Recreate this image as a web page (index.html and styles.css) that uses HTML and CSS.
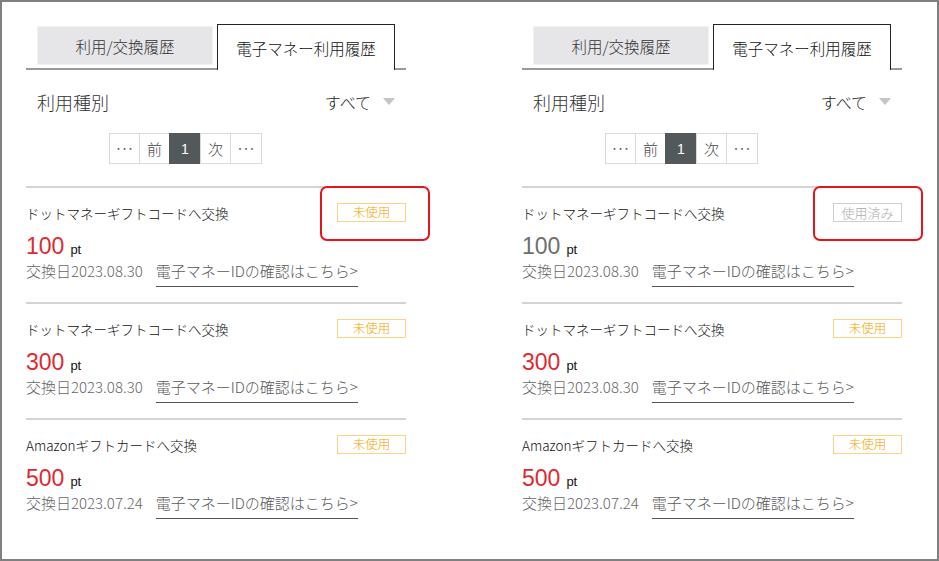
FILE: index.html
```html
<!DOCTYPE html>
<html lang="ja">
<head>
<meta charset="utf-8">
<title>電子マネー利用履歴</title>
<link rel="stylesheet" href="styles.css">
</head>
<body>
<div class="frame">
  <section class="panel">
    <div class="tabs">
      <div class="tab">利用/交換履歴</div>
      <div class="tab active">電子マネー利用履歴</div>
    </div>
    <div class="filter">
      <span class="filter-label">利用種別</span>
      <span class="filter-select">すべて<i class="caret"></i></span>
    </div>
    <div class="pager">
      <span class="cell dots">･･･</span>
      <span class="cell">前</span>
      <span class="cell wide current">1</span>
      <span class="cell">次</span>
      <span class="cell wide dots">･･･</span>
    </div>
    <div class="list">
      <div class="item">
        <div class="head"><span class="title">ドットマネーギフトコードへ交換</span><span class="badge unused">未使用</span></div>
        <div class="amount"><span class="num">100</span><span class="unit">pt</span></div>
        <div class="meta"><span class="date">交換日2023.08.30</span><a class="link" href="#">電子マネーIDの確認はこちら&gt;</a></div>
        <div class="mark mark-left"></div>
      </div>
      <div class="item">
        <div class="head"><span class="title">ドットマネーギフトコードへ交換</span><span class="badge unused">未使用</span></div>
        <div class="amount"><span class="num">300</span><span class="unit">pt</span></div>
        <div class="meta"><span class="date">交換日2023.08.30</span><a class="link" href="#">電子マネーIDの確認はこちら&gt;</a></div>
      </div>
      <div class="item">
        <div class="head"><span class="title">Amazonギフトカードへ交換</span><span class="badge unused">未使用</span></div>
        <div class="amount"><span class="num">500</span><span class="unit">pt</span></div>
        <div class="meta"><span class="date">交換日2023.07.24</span><a class="link" href="#">電子マネーIDの確認はこちら&gt;</a></div>
      </div>
    </div>
  </section>

  <section class="panel">
    <div class="tabs">
      <div class="tab">利用/交換履歴</div>
      <div class="tab active">電子マネー利用履歴</div>
    </div>
    <div class="filter">
      <span class="filter-label">利用種別</span>
      <span class="filter-select">すべて<i class="caret"></i></span>
    </div>
    <div class="pager">
      <span class="cell dots">･･･</span>
      <span class="cell">前</span>
      <span class="cell wide current">1</span>
      <span class="cell">次</span>
      <span class="cell wide dots">･･･</span>
    </div>
    <div class="list">
      <div class="item">
        <div class="head"><span class="title">ドットマネーギフトコードへ交換</span><span class="badge used">使用済み</span></div>
        <div class="amount"><span class="num gray">100</span><span class="unit">pt</span></div>
        <div class="meta"><span class="date">交換日2023.08.30</span><a class="link" href="#">電子マネーIDの確認はこちら&gt;</a></div>
        <div class="mark mark-right"></div>
      </div>
      <div class="item">
        <div class="head"><span class="title">ドットマネーギフトコードへ交換</span><span class="badge unused">未使用</span></div>
        <div class="amount"><span class="num">300</span><span class="unit">pt</span></div>
        <div class="meta"><span class="date">交換日2023.08.30</span><a class="link" href="#">電子マネーIDの確認はこちら&gt;</a></div>
      </div>
      <div class="item">
        <div class="head"><span class="title">Amazonギフトカードへ交換</span><span class="badge unused">未使用</span></div>
        <div class="amount"><span class="num">500</span><span class="unit">pt</span></div>
        <div class="meta"><span class="date">交換日2023.07.24</span><a class="link" href="#">電子マネーIDの確認はこちら&gt;</a></div>
      </div>
    </div>
  </section>
</div>
</body>
</html>
```

FILE: styles.css
```css
html, body {
  margin: 0;
  padding: 0;
  background: #fff;
}
body {
  font-family: "Noto Sans CJK JP", "Noto Sans", sans-serif;
  font-weight: 300;
  color: #222;
}
.frame {
  box-sizing: border-box;
  width: 939px;
  height: 561px;
  border: 2px solid #808080;
  display: flex;
  gap: 116px;
  padding: 22px 0 0 24px;
  overflow: hidden;
}
.panel {
  width: 380px;
  flex: none;
}

/* tabs */
.tabs {
  display: flex;
  align-items: flex-end;
  gap: 4px;
  height: 44px;
  padding-left: 11px;
  border-bottom: 2px solid #9a9a9a;
}
.tab {
  box-sizing: border-box;
  width: 176px;
  height: 39px;
  margin-bottom: 3px;
  background: #e6e6e8;
  border: 1px solid #f2f2f2;
  display: flex;
  align-items: center;
  justify-content: center;
  font-size: 15.5px;
  color: #333;
}
.tab.active {
  width: 178px;
  height: 46px;
  margin-bottom: -2px;
  background: #fff;
  border: 1px solid #222;
  border-bottom: none;
  padding-top: 1px;
  color: #111;
}

/* filter */
.filter {
  height: 63px;
  display: flex;
  align-items: center;
  justify-content: space-between;
  padding: 0 11px;
}
.filter-label {
  font-size: 18px;
  color: #333;
}
.filter-select {
  display: flex;
  align-items: center;
  gap: 12px;
  font-size: 16px;
  color: #222;
}
.caret {
  width: 0;
  height: 0;
  border-left: 6px solid transparent;
  border-right: 6px solid transparent;
  border-top: 7px solid #c4c4c4;
}

/* pager */
.pager {
  display: flex;
  margin-left: 83px;
  height: 31px;
}
.cell {
  box-sizing: border-box;
  width: 31px;
  height: 31px;
  margin-left: -1px;
  border: 1px solid #dadada;
  display: flex;
  align-items: center;
  justify-content: center;
  font-size: 15px;
  color: #444;
  background: #fff;
}
.cell:first-child {
  margin-left: 0;
}
.cell.wide {
  width: 32px;
}
.cell.dots {
  font-size: 12px;
  color: #555;
}
.cell.current {
  background: #53585a;
  border-color: #53585a;
  color: #fff;
  font-family: "Liberation Sans", sans-serif;
  font-weight: 400;
  font-size: 14px;
}

/* list */
.list {
  margin-top: 22px;
}
.item {
  position: relative;
  box-sizing: border-box;
  height: 116px;
  border-top: 2px solid #d4d4d4;
  padding: 15px 0 21px;
}
.head {
  display: flex;
  align-items: center;
  justify-content: space-between;
  height: 19px;
}
.title {
  font-size: 13.5px;
  color: #111;
}
.badge {
  box-sizing: border-box;
  width: 69px;
  height: 19px;
  display: flex;
  align-items: center;
  justify-content: center;
  font-size: 12.5px;
  line-height: 1;
}
.badge.unused {
  border: 1px solid #fdd383;
  color: #f5a300;
}
.badge.used {
  border: 1px solid #cfcfcf;
  color: #acacac;
  font-size: 13px;
}
.amount {
  margin-top: 9px;
  height: 30px;
  line-height: 30px;
  font-family: "Liberation Sans", sans-serif;
  font-weight: 400;
}
.num {
  font-size: 23px;
  color: #dd2a30;
}
.num.gray {
  color: #6e6e6e;
}
.unit {
  font-size: 13px;
  color: #111;
  margin-left: 6px;
}
.meta {
  height: 20px;
  line-height: 20px;
  display: flex;
  gap: 13px;
  white-space: nowrap;
}
.date {
  font-size: 15px;
  color: #666;
}
.link {
  font-size: 15px;
  color: #5a5a5a;
  text-decoration: none;
  border-bottom: 1px solid #555;
  padding-bottom: 4px;
  line-height: 20px;
  height: 21px;
}

/* red annotation boxes */
.mark {
  position: absolute;
  top: -2px;
  width: 110px;
  height: 55px;
  box-sizing: border-box;
  border: 2px solid #e8141c;
  border-radius: 7px;
}
.mark-left {
  left: 294px;
}
.mark-right {
  left: 291px;
}
```
